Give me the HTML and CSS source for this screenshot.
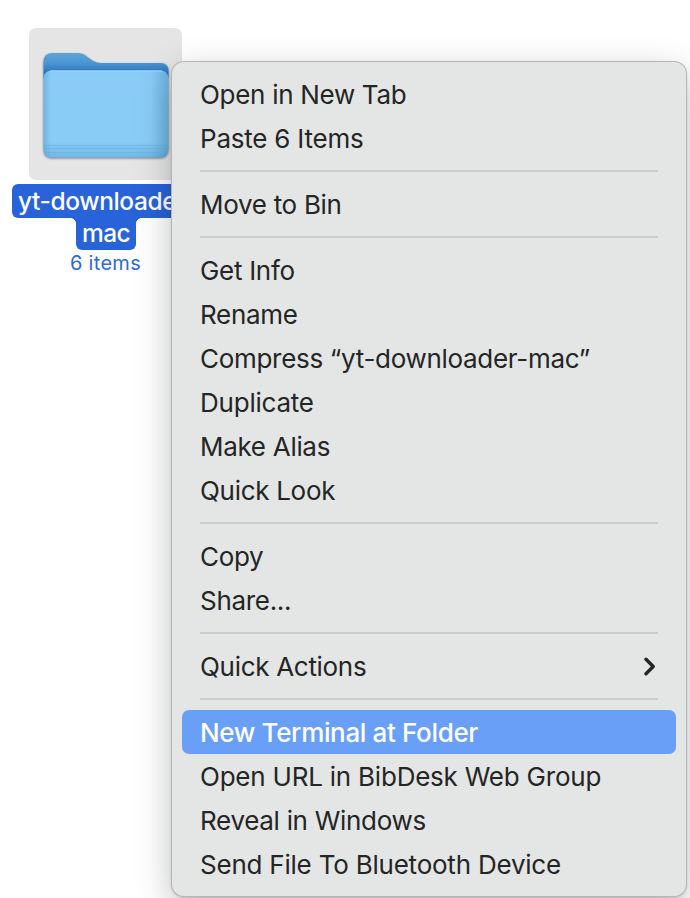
FILE: index.html
```html
<!DOCTYPE html>
<html lang="en">
<head>
<meta charset="utf-8">
<title>Folder context menu</title>
<link rel="stylesheet" href="styles.css">
</head>
<body>
<main class="desktop">
  <section class="file">
    <div class="file-icon">
      <svg width="153" height="152" viewBox="0 0 153 152" aria-hidden="true">
        <defs>
          <linearGradient id="back" x1="0" y1="25" x2="0" y2="44" gradientUnits="userSpaceOnUse">
            <stop offset="0" stop-color="#5da5d9"/>
            <stop offset=".5" stop-color="#4b97d2"/>
            <stop offset="1" stop-color="#2f77c0"/>
          </linearGradient>
          <linearGradient id="front" x1="0" y1="0" x2="0" y2="1">
            <stop offset="0" stop-color="#86cbf5"/>
            <stop offset=".1" stop-color="#8accf7"/>
            <stop offset=".82" stop-color="#89ccf6"/>
            <stop offset="1" stop-color="#70b8e6"/>
          </linearGradient>
          <linearGradient id="edge" x1="0" y1="0" x2="1" y2="0">
            <stop offset="0" stop-color="#398bc4" stop-opacity=".35"/>
            <stop offset=".06" stop-color="#398bc4" stop-opacity="0"/>
            <stop offset=".86" stop-color="#398bc4" stop-opacity="0"/>
            <stop offset="1" stop-color="#398bc4" stop-opacity=".35"/>
          </linearGradient>
        </defs>
        <g class="folder-shape">
          <path fill="url(#back)" d="M14.500 50V34q0-9 9-9h25q6 0 10 4l5 3.500q4 2.500 9 2.500h59q8 0 8 8v7z"/>
          <rect x="14.500" y="42.500" width="125" height="87" rx="8" fill="url(#front)"/>
        </g>
        <rect x="14.500" y="42.500" width="125" height="87" rx="8" fill="url(#edge)"/>
        <path d="M21 43h112" stroke="#a8dcfa" stroke-width="1"/>
        <path d="M15 117.500h124M15 120.500h124M15 124.500h124" stroke="#67aedd" stroke-width="1" opacity=".55"/>
      </svg>
    </div>
    <div class="name">
      <span class="name-first">yt-downloader-</span>
      <span class="name-last">mac</span>
    </div>
    <div class="count">6 items</div>
  </section>
  <nav class="menu">
    <div class="item"><span>Open in New Tab</span></div>
    <div class="item wide"><span>Paste 6 Items</span></div>
    <hr>
    <div class="item"><span>Move to Bin</span></div>
    <hr>
    <div class="item"><span>Get Info</span></div>
    <div class="item"><span>Rename</span></div>
    <div class="item"><span>Compress “yt-downloader-mac”</span></div>
    <div class="item wide"><span>Duplicate</span></div>
    <div class="item"><span>Make Alias</span></div>
    <div class="item"><span>Quick Look</span></div>
    <hr>
    <div class="item"><span>Copy</span></div>
    <div class="item"><span>Share...</span></div>
    <hr>
    <div class="item"><span>Quick Actions</span>
      <svg class="chevron" width="14" height="20" viewBox="0 0 14 20" aria-hidden="true"><path d="M3 2.300 10.200 9.500 3 16.700"/></svg>
    </div>
    <hr>
    <div class="item selected"><span>New Terminal at Folder</span></div>
    <div class="item wide"><span>Open URL in BibDesk Web Group</span></div>
    <div class="item"><span>Reveal in Windows</span></div>
    <div class="item wide"><span>Send File To Bluetooth Device</span></div>
  </nav>
</main>
</body>
</html>
```
FILE: styles.css
```css
* { box-sizing: border-box; }
body {
  margin: 0;
  background: #fff;
  font-family: Inter, "Liberation Sans", sans-serif;
  overflow: hidden;
}
.desktop { position: relative; width: 690px; height: 898px; overflow: hidden; }
.file {
  display: flex;
  flex-direction: column;
  align-items: center;
  width: 187px;
  margin-left: 12px;
  padding-top: 28px;
}
.file-icon {
  align-self: flex-start;
  width: 153px;
  height: 152px;
  margin-left: 17px;
  border-radius: 7px;
  background: #e5e5e5;
}
.file-icon svg { display: block; }
.folder-shape { filter: drop-shadow(0 1px 1px rgba(0, 0, 0, .45)); }
.name {
  display: flex;
  flex-direction: column;
  width: 187px;
  margin-top: 4px;
  color: #fff;
  font-size: 24.5px;
  font-weight: 500;
  white-space: nowrap;
}
.name-first {
  height: 34px;
  padding-left: 6px;
  line-height: 34px;
  border-radius: 6px;
  background: #2963d9;
  letter-spacing: -.4px;
}
.name-last {
  position: relative;
  width: 60px;
  height: 32px;
  margin-left: 64px;
  line-height: 30px;
  text-align: center;
  letter-spacing: -.6px;
  border-radius: 0 0 6px 6px;
  background: #2963d9;
}
.name-last::before, .name-last::after {
  content: "";
  position: absolute;
  top: 0;
  width: 5px;
  height: 5px;
}
.name-last::before { right: 100%; background: radial-gradient(circle at 0 100%, transparent 4.5px, #2963d9 5px); }
.name-last::after { left: 100%; background: radial-gradient(circle at 100% 100%, transparent 4.5px, #2963d9 5px); }
.count { height: 28px; color: #2f69d2; font-size: 20px; line-height: 26px; letter-spacing: .3px; }
.menu {
  position: absolute;
  top: 62px;
  left: 172px;
  width: 514px;
  height: 834px;
  padding: 10px 10px 9px;
  border-radius: 12px;
  background: #e4e6e5;
  box-shadow: 0 0 0 1px #b5b7b6, 0 1px 3px rgba(0, 0, 0, .25), 0 12px 36px rgba(0, 0, 0, .26);
}
.item {
  display: flex;
  align-items: center;
  justify-content: space-between;
  height: 44px;
  padding: 2px 19px 0 18px;
  border-radius: 7px;
  color: #242525;
  font-size: 26px;
  line-height: 42px;
  white-space: nowrap;
  letter-spacing: -.3px;
}
.wide { letter-spacing: -.22px; }
.menu hr { height: 2px; margin: 10px 18px; border: 0; background: #cbcdcc; }
.selected { background: #6a9ff8; color: #fff; font-weight: 500; letter-spacing: -.35px; }
.chevron { fill: none; stroke: #242525; stroke-width: 3.4; stroke-linecap: round; stroke-linejoin: round; }
```
